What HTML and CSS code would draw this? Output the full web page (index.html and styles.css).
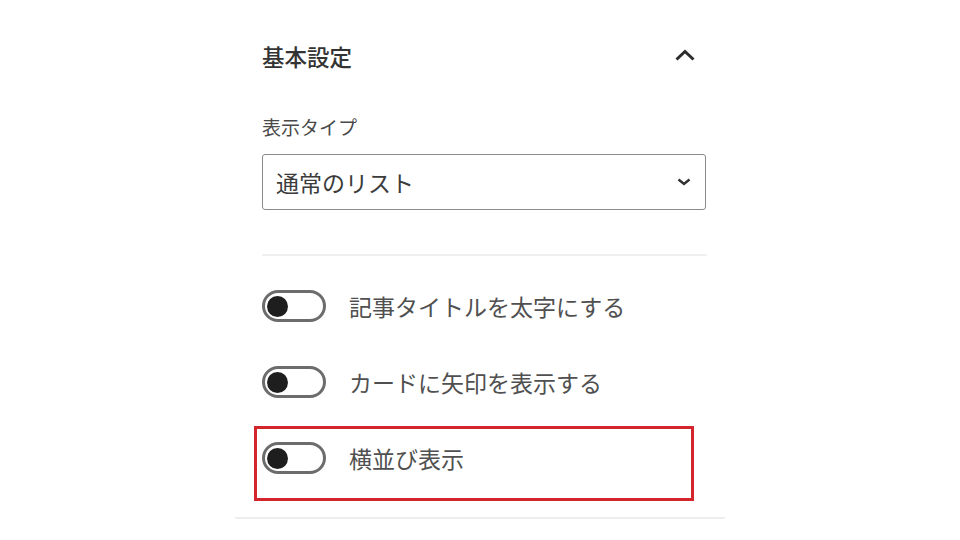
FILE: index.html
```html
<!DOCTYPE html>
<html lang="ja">
    <head>
        <meta charset="UTF-8" />
        <meta name="viewport" content="width=device-width, initial-scale=1.0" />
        <title>基本設定</title>
        <link rel="stylesheet" href="styles.css">
    </head>
    <body>
        <div class="panel">
            <div class="panel-head">
                <h2>基本設定</h2>
                <svg class="chev-up" width="24" height="24" viewBox="0 0 24 24">
                    <path d="M3.5 15.5 L12 7.5 L20.5 15.5" />
                </svg>
            </div>

            <label class="field-label" for="type">表示タイプ</label>
            <div class="select-box" id="type">
                <span>通常のリスト</span>
                <svg class="chev-down" width="16" height="16" viewBox="0 0 16 16">
                    <path d="M2.5 5.5 L8 10 L13.5 5.5" />
                </svg>
            </div>

            <hr class="divider">

            <div class="toggle-list">
                <div class="toggle-row">
                    <span class="toggle"><span class="knob"></span></span>
                    <span class="toggle-text">記事タイトルを太字にする</span>
                </div>
                <div class="toggle-row">
                    <span class="toggle"><span class="knob"></span></span>
                    <span class="toggle-text">カードに矢印を表示する</span>
                </div>
                <div class="toggle-row marked">
                    <span class="toggle"><span class="knob"></span></span>
                    <span class="toggle-text">横並び表示</span>
                </div>
            </div>
        </div>
    </body>
</html>
```

FILE: styles.css
```css
body {
    margin: 0;
    background: #ffffff;
    font-family: "Noto Sans CJK JP", "Noto Sans", sans-serif;
}

.panel {
    width: 490px;
    box-sizing: border-box;
    margin: 0 auto;
    padding: 30px 18px 16px 27px;
    border-bottom: 2px solid #eeeeee;
}

.panel-head {
    display: flex;
    align-items: center;
    justify-content: space-between;
    height: 52px;
    padding-right: 10px;
}

.panel-head h2 {
    margin: 0;
    font-size: 22.5px;
    font-weight: 500;
    line-height: 1;
    color: #333333;
}

.chev-up path {
    fill: none;
    stroke: #2b2b2b;
    stroke-width: 3;
}

.field-label {
    display: block;
    margin-top: 33px;
    font-size: 19px;
    line-height: 24px;
    color: #4a4a4a;
}

.select-box {
    display: flex;
    align-items: center;
    justify-content: space-between;
    box-sizing: border-box;
    height: 56px;
    margin-top: 15px;
    margin-right: 1px;
    padding: 0 13px 0 13px;
    border: 1.5px solid #8c8c8c;
    border-radius: 3px;
    font-size: 23px;
    color: #3c3c3c;
}

.chev-down path {
    fill: none;
    stroke: #333333;
    stroke-width: 2.5;
}

.divider {
    margin: 44px 0 0;
    border: none;
    height: 2px;
    background: #f0f0f0;
}

.toggle-list {
    padding-top: 34px;
}

.toggle-row {
    display: flex;
    align-items: center;
    height: 32px;
}

.toggle-row + .toggle-row {
    margin-top: 44px;
}

.toggle {
    display: flex;
    align-items: center;
    box-sizing: border-box;
    width: 64px;
    height: 32px;
    padding-left: 2px;
    border: 3px solid #6c6c6c;
    border-radius: 16px;
    flex-shrink: 0;
}

.knob {
    width: 21px;
    height: 21px;
    border-radius: 50%;
    background: #1e1e1e;
}

.toggle-text {
    margin-left: 23px;
    font-size: 23px;
    line-height: 32px;
    color: #505050;
}

.toggle-row.marked {
    height: auto;
    box-sizing: border-box;
    width: 440px;
    margin-top: 28px;
    margin-left: -8px;
    padding: 13px 0 24px 5px;
    border: 3px solid #d3262c;
}
```
